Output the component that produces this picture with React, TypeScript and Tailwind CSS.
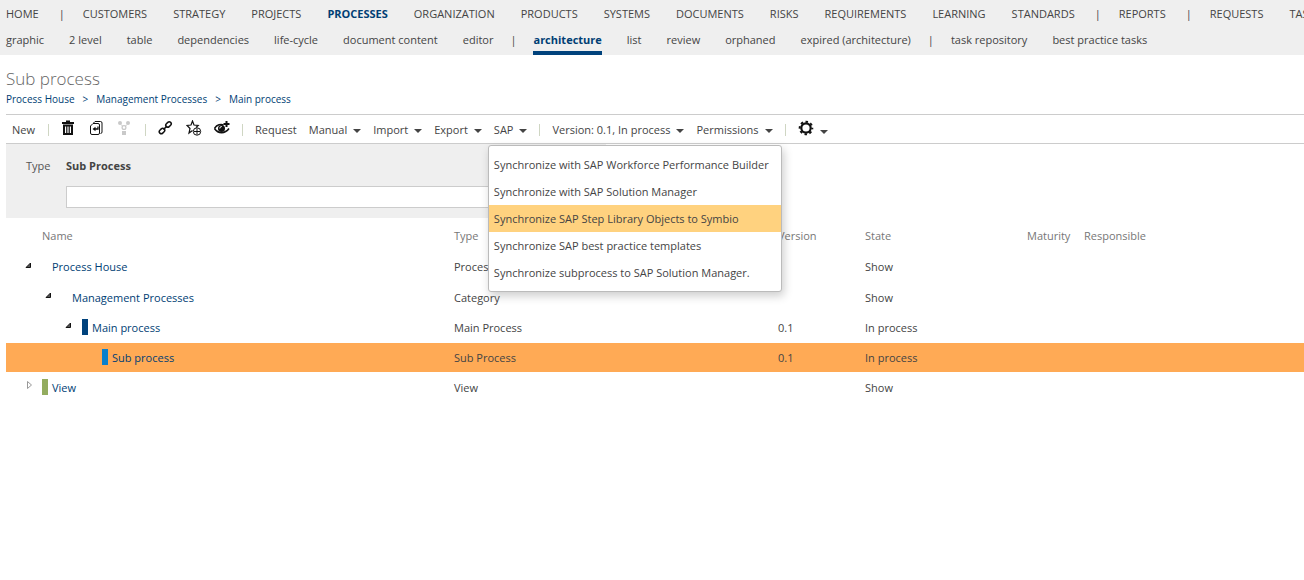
import type { ReactNode } from "react";
import clsx from "clsx";

const mainNav = [
  "HOME", "|", "CUSTOMERS", "STRATEGY", "PROJECTS", "PROCESSES", "ORGANIZATION",
  "PRODUCTS", "SYSTEMS", "DOCUMENTS", "RISKS", "REQUIREMENTS", "LEARNING",
  "STANDARDS", "|", "REPORTS", "|", "REQUESTS", "TASKS",
];

const subNav = [
  "graphic", "2 level", "table", "dependencies", "life-cycle", "document content",
  "editor", "|", "architecture", "list", "review", "orphaned",
  "expired (architecture)", "|", "task repository", "best practice tasks",
];

const sapActions = [
  "Synchronize with SAP Workforce Performance Builder",
  "Synchronize with SAP Solution Manager",
  "Synchronize SAP Step Library Objects to Symbio",
  "Synchronize SAP best practice templates",
  "Synchronize subprocess to SAP Solution Manager.",
];

interface Row {
  name: string;
  type: string;
  version?: string;
  state: string;
  indent: string;
  bar?: string;
  toggle?: "open" | "closed";
  selected?: boolean;
}

const rows: Row[] = [
  { name: "Process House", type: "Process House", state: "Show", indent: "pl-[18px]", toggle: "open" },
  { name: "Management Processes", type: "Category", state: "Show", indent: "pl-[38px]", toggle: "open" },
  { name: "Main process", type: "Main Process", version: "0.1", state: "In process", indent: "pl-[58px]", bar: "bg-[#00427c]", toggle: "open" },
  { name: "Sub process", type: "Sub Process", version: "0.1", state: "In process", indent: "pl-[78px]", bar: "bg-[#0a80cc]", selected: true },
  { name: "View", type: "View", state: "Show", indent: "pl-[18px]", bar: "bg-[#93ac5f]", toggle: "closed" },
];

function Icon({ children, className }: { children: ReactNode; className?: string }) {
  return (
    <svg className={clsx("h-4 w-4", className)} viewBox="0 0 16 16" fill="none" stroke="currentColor">
      {children}
    </svg>
  );
}

function TrashIcon() {
  return (
    <Icon>
      <path d="M1 3h12M5 1.500h4" strokeWidth="2" />
      <path d="M3 5.500h8v8.500H3z" strokeWidth="2" />
      <path d="M5.800 6v8M8.200 6v8" strokeWidth="1.200" />
    </Icon>
  );
}

function CopyIcon() {
  return (
    <Icon>
      <path d="M4.500 3.500V3L6 1.500h5.500A1.500 1.500 0 0 1 13 3v9a1.500 1.500 0 0 1-1.500 1.500" />
      <path d="M1.500 6 4 3.500h5A1.500 1.500 0 0 1 10.500 5v8A1.500 1.500 0 0 1 9 14.500H3A1.500 1.500 0 0 1 1.500 13z" />
      <path d="M9 6.500V9H5.500" strokeWidth="1.300" />
      <path d="M3.500 9 6.500 6.800v4.400z" fill="currentColor" stroke="none" />
    </Icon>
  );
}

function ShareIcon() {
  return (
    <Icon className="text-[#c9c9c9]">
      <circle cx="3" cy="3" r="2" fill="currentColor" stroke="none" />
      <circle cx="11" cy="3" r="2" fill="currentColor" stroke="none" />
      <circle cx="7" cy="7.500" r="1.900" strokeWidth="1.300" />
      <path d="m4 4.500 1.500 1.500M10 4.500 8.500 6" />
      <path d="M5 11h4v4H5z" fill="currentColor" stroke="none" />
    </Icon>
  );
}

function LinkIcon() {
  return (
    <Icon>
      <rect x="-3" y="-2" width="6" height="4" rx="2" transform="translate(10.500 4.500) rotate(-45)" strokeWidth="1.500" />
      <rect x="-3" y="-2" width="6" height="4" rx="2" transform="translate(4 11) rotate(-45)" strokeWidth="1.500" />
      <path d="m5.500 9.500 3.500-3.500" strokeWidth="1.600" />
    </Icon>
  );
}

function StarIcon() {
  return (
    <Icon>
      <path d="M6.500 10.500 3 13l1-4.500L1 5.500l4-.5L6.500 1 8 5l4.200.500L10 7.500" strokeWidth="1.200" />
      <circle cx="11" cy="11.500" r="3.700" />
      <path d="M11 8.500v6M8 11.500h6" />
    </Icon>
  );
}

function EyeIcon() {
  return (
    <Icon>
      <path d="M.5 8.500C3 4.500 7 4 9.500 5M.5 8.500c3.500 5.500 10.500 5.500 14.500 0" strokeWidth="1.600" />
      <circle cx="7.500" cy="8.500" r="3.500" fill="currentColor" stroke="none" />
      <path d="M5.800 8.500A1.900 1.900 0 0 1 7.800 6.500" stroke="white" />
      <path d="M12.500 1v6M9.500 4h6" strokeWidth="2" />
    </Icon>
  );
}

function GearIcon() {
  return (
    <Icon>
      <circle cx="8" cy="8" r="4.700" strokeWidth="2.200" />
      <circle cx="8" cy="8" r="6.300" strokeWidth="2" strokeDasharray="2.500 2.448" strokeDashoffset="1.250" />
    </Icon>
  );
}

function Caret({ className }: { className?: string }) {
  return (
    <svg className={clsx("h-1 w-2", className)} viewBox="0 0 8 4" fill="currentColor">
      <path d="M0 0h8L4 4z" />
    </svg>
  );
}

function Separator() {
  return <span className="h-3 w-px bg-[#cfd6c3]" />;
}

function MenuButton({ label }: { label: string }) {
  return (
    <button type="button" className="flex items-center gap-1.5">
      {label}
      <Caret className="mt-0.5" />
    </button>
  );
}

function IconButton({ label, children }: { label: string; children: ReactNode }) {
  return (
    <button type="button" aria-label={label} className="-mt-1 text-[#111]">
      {children}
    </button>
  );
}

function SapMenu() {
  return (
    <div className="absolute top-[25px] -left-1.5 z-10 w-[294px] rounded-[3px] border border-[#bbb] bg-white py-[5px] shadow-[2px_4px_10px_rgba(0,0,0,0.2)]">
      {sapActions.map((action, i) => (
        <button
          key={action}
          type="button"
          className={clsx("block h-[27px] w-full px-[5px] text-left whitespace-nowrap", i === 2 && "bg-[#ffd27f]")}
        >
          {action}
        </button>
      ))}
    </div>
  );
}

function Toolbar() {
  return (
    <div className="flex h-[30px] items-center gap-3 border-y border-[#ccc] pt-0.5 pl-1.5 whitespace-nowrap">
      <button type="button" className="min-w-6 text-left">New</button>
      <Separator />
      <IconButton label="Delete"><TrashIcon /></IconButton>
      <IconButton label="Copy"><CopyIcon /></IconButton>
      <IconButton label="Share"><ShareIcon /></IconButton>
      <Separator />
      <IconButton label="Link"><LinkIcon /></IconButton>
      <IconButton label="Add to favorites"><StarIcon /></IconButton>
      <IconButton label="Watch"><EyeIcon /></IconButton>
      <Separator />
      <button type="button">Request</button>
      <MenuButton label="Manual" />
      <MenuButton label="Import" />
      <MenuButton label="Export" />
      <div className="relative">
        <MenuButton label="SAP" />
        <SapMenu />
      </div>
      <Separator />
      <MenuButton label="Version: 0.1, In process" />
      <MenuButton label="Permissions" />
      <Separator />
      <button type="button" aria-label="Settings" className="flex items-center gap-1.5">
        <span className="-mt-1 text-[#111]"><GearIcon /></span>
        <Caret className="mt-1" />
      </button>
    </div>
  );
}

function TypePanel() {
  return (
    <div className="h-[74px] w-[600px] bg-[#efefef] pt-3 pl-5">
      <div className="flex h-5 items-center">
        <label htmlFor="type-filter" className="w-10 text-[#555]">Type</label>
        <span className="font-bold">Sub Process</span>
      </div>
      <input id="type-filter" type="text" className="mt-2.5 ml-10 block h-[22px] w-[528px] border border-[#ccc] bg-white px-1" />
    </div>
  );
}

function Toggle({ state }: { state?: "open" | "closed" }) {
  if (!state) return <span className="w-[18px]" />;
  return (
    <button type="button" aria-label={state === "open" ? "Collapse" : "Expand"} className="-mt-1 w-[18px]">
      <svg className="h-2.5 w-2.5" viewBox="0 0 10 10">
        {state === "open" ? (
          <path d="M2 7.500h4.500V3z" fill="#555" stroke="#111" />
        ) : (
          <path d="M3.500 1.500v7l4-3.500z" fill="white" stroke="#999" />
        )}
      </svg>
    </button>
  );
}

function ProcessTable() {
  return (
    <table className="w-full table-fixed border-collapse text-left whitespace-nowrap">
      <colgroup>
        <col className="w-[448px]" />
        <col className="w-[324px]" />
        <col className="w-[87px]" />
        <col className="w-[162px]" />
        <col className="w-[57px]" />
        <col />
      </colgroup>
      <thead>
        <tr className="h-[34px] text-[#777]">
          <th className="pt-0.5 pl-9 font-normal">Name</th>
          <th className="pt-0.5 font-normal">Type</th>
          <th className="pt-0.5 font-normal">Version</th>
          <th className="pt-0.5 font-normal">State</th>
          <th className="pt-0.5 font-normal">Maturity</th>
          <th className="pt-0.5 font-normal">Responsible</th>
        </tr>
      </thead>
      <tbody>
        {rows.map((row) => (
          <tr key={row.name} className={clsx("h-[30px] border-b border-white", row.selected && "bg-[#ffaa55]")}>
            <td>
              <div className={clsx("flex items-center", row.indent)}>
                <Toggle state={row.toggle} />
                <span className={clsx("mr-1 h-4 w-1.5", row.bar)} />
                <a href="#" className="pt-px text-[#003e74]">{row.name}</a>
              </div>
            </td>
            <td className="pt-px">{row.type}</td>
            <td className="pt-px">{row.version}</td>
            <td className="pt-px">{row.state}</td>
            <td />
            <td />
          </tr>
        ))}
      </tbody>
    </table>
  );
}

export default function App() {
  return (
    <div className="overflow-hidden bg-white font-['Open_Sans',sans-serif] text-[11px] leading-5 text-[#444]">
      <header className="h-[55px] bg-[#efefef] pl-1.5 whitespace-nowrap">
        <nav className="flex h-7 items-center gap-[26px]">
          {mainNav.map((item, i) =>
            item === "|" ? (
              <span key={i} className="-mr-2 -ml-1.5">|</span>
            ) : (
              <a key={i} href="#" className={clsx(item === "PROCESSES" && "font-bold text-[#003e74]")}>{item}</a>
            )
          )}
        </nav>
        <nav className="flex h-[27px] gap-[25px]">
          {subNav.map((item, i) =>
            item === "|" ? (
              <span key={i} className="-mx-2 pt-0.5">|</span>
            ) : (
              <a
                key={i}
                href="#"
                className={clsx("pt-0.5", item === "architecture" && "border-b-4 border-[#00427c] font-bold text-[#003e74]")}
              >
                {item}
              </a>
            )
          )}
        </nav>
      </header>
      <main className="pl-1.5">
        <h1 className="pt-3 text-[17px] leading-6 font-light text-[#666]">Sub process</h1>
        <div className="mb-[7px] flex h-4 items-center gap-2 text-[10px] text-[#003e74]">
          <a href="#">Process House</a>
          <span>&gt;</span>
          <a href="#">Management Processes</a>
          <span>&gt;</span>
          <a href="#">Main process</a>
        </div>
        <Toolbar />
        <TypePanel />
        <ProcessTable />
      </main>
    </div>
  );
}
